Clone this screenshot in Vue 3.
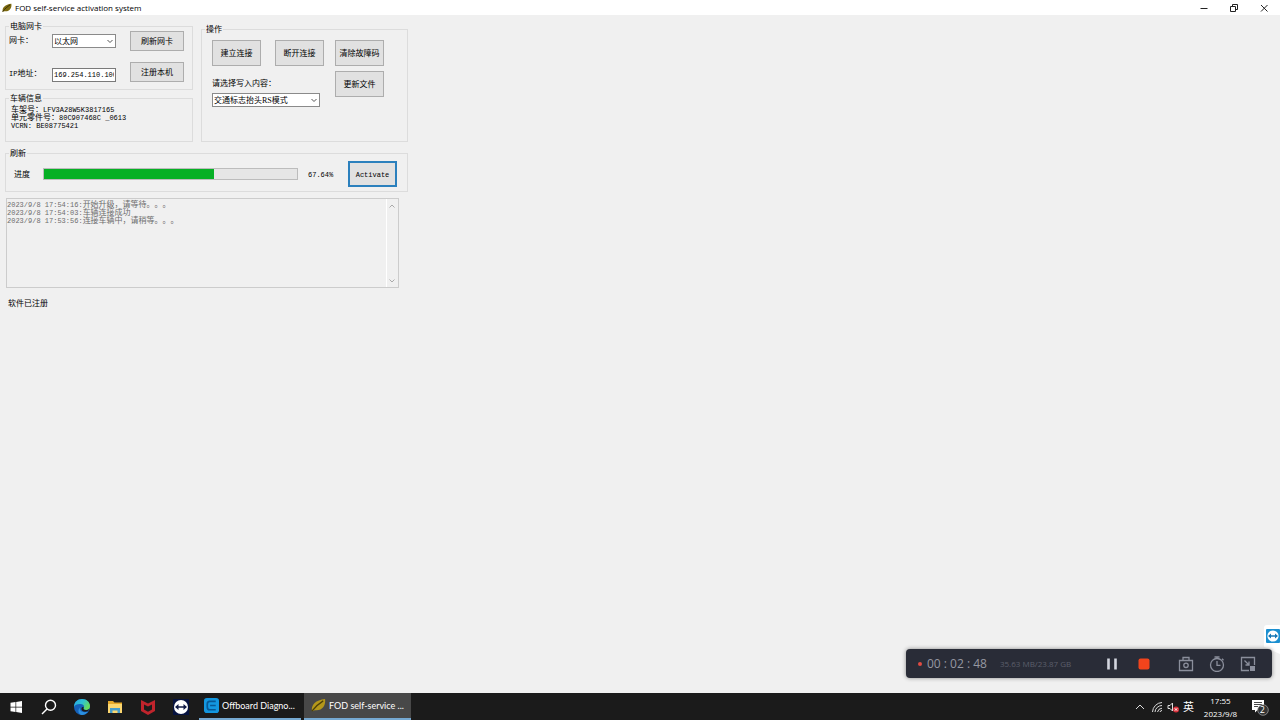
<script setup>
import { ref } from 'vue'

const adapter = ref('以太网')
const ip = ref('169.254.110.100')
const mode = ref('交通标志抬头RS模式')
const progress = ref(67)
const logs = [
  { time: '2023/9/8 17:54:16:', text: '开始升级，请等待。。。' },
  { time: '2023/9/8 17:54:03:', text: '车辆连接成功' },
  { time: '2023/9/8 17:53:56:', text: '连接车辆中，请稍等。。。' }
]
</script>

<template>
  <div class="desktop">
    <header class="titlebar">
      <svg class="leaf" viewBox="0 0 16 16" aria-hidden="true">
        <path d="M1 14C0 7 5 2 15 1c1 7-3 13-11 12z" fill="#7d6a10" />
        <path d="M1 14C5 9 8 6 13 3" stroke="#332c05" stroke-width="1.4" fill="none" />
      </svg>
      <h1>FOD self-service activation system</h1>
      <div class="window-buttons">
        <button aria-label="Minimize"><svg viewBox="0 0 10 10"><path d="M1.5 5.5h7" /></svg></button>
        <button aria-label="Restore"><svg viewBox="0 0 10 10"><path d="M1.500 3.500h5v5h-5zM3.500 3.500V1.500h5v5H6.500" /></svg></button>
        <button aria-label="Close"><svg viewBox="0 0 10 10"><path d="M2 2l6.500 6.500M8.500 2L2 8.500" /></svg></button>
      </div>
    </header>

    <main class="client">
      <div class="top">
        <div class="left">
          <fieldset class="network">
            <legend>电脑网卡</legend>
            <div class="net-row">
              <div class="net-labels">
                <label for="adapter">网卡：</label>
                <label for="ip"><span class="mono">IP</span>地址：</label>
              </div>
              <div class="net-fields">
                <div class="combo">
                  <select id="adapter" v-model="adapter"><option>以太网</option></select>
                  <svg viewBox="0 0 8 8"><path d="M1.500 3L4 5.500 6.500 3" /></svg>
                </div>
                <input id="ip" v-model="ip" class="mono" type="text" />
              </div>
              <div class="net-buttons">
                <button class="btn">刷新网卡</button>
                <button class="btn">注册本机</button>
              </div>
            </div>
          </fieldset>
          <fieldset class="vehicle">
            <legend>车辆信息</legend>
            <p>车架号：<span class="mono">LFV3A28W5K3817165</span></p>
            <p>单元零件号：<span class="mono">80C907468C _0613</span></p>
            <p><span class="mono">VCRN: BE08775421</span></p>
          </fieldset>
        </div>

        <fieldset class="operate">
          <legend>操作</legend>
          <div class="op-row">
            <div class="op-main">
              <div class="op-buttons">
                <button class="btn tall">建立连接</button>
                <button class="btn tall">断开连接</button>
              </div>
              <label for="mode">请选择写入内容：</label>
              <div class="combo">
                <select id="mode" v-model="mode"><option>交通标志抬头RS模式</option></select>
                <svg viewBox="0 0 8 8"><path d="M1.500 3L4 5.500 6.500 3" /></svg>
              </div>
            </div>
            <div class="op-side">
              <button class="btn tall">清除故障码</button>
              <button class="btn tall">更新文件</button>
            </div>
          </div>
        </fieldset>
      </div>

      <fieldset class="flash">
        <legend>刷新</legend>
        <div class="flash-row">
          <label for="bar">进度</label>
          <progress id="bar" :value="progress" max="100"></progress>
          <output class="mono">67.64%</output>
          <button class="btn tall primary mono">Activate</button>
        </div>
      </fieldset>

      <section class="log" role="log">
        <div class="log-lines">
          <p v-for="l in logs" :key="l.time"><span class="mono">{{ l.time }}</span>{{ l.text }}</p>
        </div>
        <div class="scroll">
          <svg viewBox="0 0 8 8"><path d="M1.500 5.500L4 3 6.500 5.500" /></svg>
          <svg viewBox="0 0 8 8"><path d="M1.500 2.500L4 5 6.500 2.500" /></svg>
        </div>
      </section>
      <p class="status">软件已注册</p>
    </main>

    <div class="viewer-tab">
      <svg viewBox="0 0 14 14"><rect width="14" height="14" rx="1" fill="#1b8fd0" /><circle cx="7" cy="7" r="5.600" fill="#fff" /><path d="M2 7l3-2.500v1.700h4V4.500L12 7 9 9.500V7.800H5v1.700z" fill="#1677b5" /></svg>
    </div>

    <div class="recorder">
      <span class="dot"></span>
      <span class="clock">00 : 02 : 48</span>
      <span class="size">35.63 MB/23.87 GB</span>
      <div class="rec-main">
        <button aria-label="Pause"><svg viewBox="0 0 16 16"><path d="M4.500 2.500v11M11.500 2.500v11" stroke="#d3d6df" stroke-width="2.600" /></svg></button>
        <button aria-label="Stop"><svg viewBox="0 0 16 16"><rect x="2.500" y="2.500" width="11" height="11" rx="2" fill="#f2441c" /></svg></button>
      </div>
      <div class="rec-tools">
        <button aria-label="Screenshot"><svg viewBox="0 0 16 16"><path d="M1.500 4.500h13v10h-13zM5 4.500v-3h6v3" /><circle cx="8" cy="9.300" r="2.200" /></svg></button>
        <button aria-label="Timer"><svg viewBox="0 0 16 16"><circle cx="8" cy="9" r="6.500" /><path d="M8 5v4.300h3.500M5.500 1h5M8 1v1.500M13 2.800l1.500 1.500" /></svg></button>
        <button aria-label="Mini view"><svg viewBox="0 0 16 16"><path d="M9 14.500H1.500v-13h13V9M4.500 4.500L9 9M9 5.500V9H5.500" /><rect x="10" y="10" width="5" height="5" fill="#8b8f9c" stroke="none" /></svg></button>
      </div>
    </div>

    <footer class="taskbar">
      <nav class="pins">
        <button aria-label="Start"><svg viewBox="0 0 16 16"><path d="M2.500 3.800l5-.7v4.600h-5zM8.200 3l5.800-.9v5.600H8.200zM2.500 8.400h5V13l-5-.7zM8.200 8.400H14V14l-5.800-.9z" fill="#fff" /></svg></button>
        <button aria-label="Search"><svg viewBox="0 0 16 16"><circle cx="9.500" cy="6.300" r="5" fill="none" stroke="#fff" stroke-width="1.400" /><path d="M6 10L1 15" stroke="#fff" stroke-width="1.500" /></svg></button>
        <button aria-label="Edge"><svg viewBox="0 0 16 16">
          <defs><linearGradient id="edge-g" x1="0" y1="0" x2="1" y2=".5"><stop offset="0" stop-color="#27a8e8" /><stop offset=".55" stop-color="#2fc2d0" /><stop offset="1" stop-color="#66dc5a" /></linearGradient></defs>
          <circle cx="8" cy="8" r="8" fill="#1560b8" />
          <path d="M0 8C0 3 3.500 0 8 0c5 0 8 3.500 8 7 0 3-2 4-4 4-2.500 0-3-1-2.200-2.200C11 6.500 8.500 5 6 5 3 5 .5 6 0 8z" fill="url(#edge-g)" />
          <path d="M6 8.500C5 12 9 14.500 14 12.500c-1 2-4 3.500-6.500 3.400C4 15 3.500 11 6 8.500z" fill="#2b8fe0" />
          <path d="M9.800 8.800C9 10 9.500 11 12 11c1.500 0 2.500-.4 3.300-1.200-.3 1-.8 1.800-1.300 2.400C10 13.500 6.800 12 7.500 9c.6-1.300 2.300-1.300 2.300-.2z" fill="#1b1b1b" />
        </svg></button>
        <button aria-label="File Explorer"><svg viewBox="0 0 16 16"><path d="M1 2h5l1.500 1.500H15V14H1z" fill="#e5a92c" /><path d="M1 5h14v9H1z" fill="#fbd66f" /><path d="M3 14V9h10v5h-2.500v-2.500h-5V14z" fill="#469dcc" /></svg></button>
        <button aria-label="McAfee"><svg viewBox="0 0 16 16"><path d="M1 1l7 3.500L15 1v11l-7 4-7-4z" fill="#c0242c" /><path d="M4 5.500l4 2 4-2v5L8 12.800l-4-2.300z" fill="#1b1b1b" /></svg></button>
        <button aria-label="TeamViewer"><svg viewBox="0 0 16 16"><rect width="16" height="16" fill="#06123f" /><circle cx="8" cy="8" r="7" fill="#fff" /><path d="M2 8l3.500-3v2.200h5V5L14 8l-3.500 3V8.800h-5V11z" fill="#101a45" /></svg></button>
      </nav>
      <button class="task">
        <svg viewBox="0 0 16 16"><rect width="16" height="16" rx="3" fill="#1397e0" /><path d="M12.500 3.500H6C4 3.500 3.500 5 3.500 6.500v3c0 2 1 3 2.500 3h6.500M6.500 8h6" fill="none" stroke="#075895" stroke-width="1.800" /></svg>
        <span>Offboard Diagno...</span>
      </button>
      <button class="task active">
        <svg viewBox="0 0 16 16"><path d="M1 14C0 7 5 2 15 1c1 7-3 13-11 12z" fill="#b5981a" /><path d="M1 14C5 9 8 6 13 3" stroke="#4d4008" stroke-width="1.400" fill="none" /></svg>
        <span>FOD self-service ...</span>
      </button>
      <div class="tray">
        <svg class="tray-up" viewBox="0 0 12 12"><path d="M2 8l4-4 4 4" /></svg>
        <svg class="tray-net" viewBox="0 0 12 12"><path d="M1.500 11A10 10 0 0 1 11 1.500M4 11a7 7 0 0 1 7-6.500M6.500 11A5 5 0 0 1 11 7.200M9 11a2 2 0 0 1 2-1.500" /></svg>
        <svg class="tray-sound" viewBox="0 0 12 12"><path d="M1 4.500h2L5.500 2v8L3 7.500H1z" /><circle cx="9" cy="8.500" r="3" fill="#d9313b" stroke="none" /><path d="M7.800 7.300l2.400 2.400M10.200 7.300L7.800 9.700" stroke="#fff" /></svg>
        <span class="ime">英</span>
        <time class="datetime"><span>17:55</span><span>2023/9/8</span></time>
        <button class="notice" aria-label="Notifications">
          <svg viewBox="0 0 18 18"><path d="M1 2h12v10H6.500L4 14.500V12H1z" fill="#fff" /><path d="M3 4.500h8M3 6.500h8M3 8.500h4" stroke="#1b1b1b" stroke-width=".8" /><circle cx="12" cy="12" r="5.300" fill="#333" stroke="#aaa" stroke-width=".7" /></svg>
          <span class="badge">2</span>
        </button>
      </div>
    </footer>
  </div>
</template>

<style>
body {
  margin: 0;
}
</style>

<style scoped>
* {
  box-sizing: border-box;
}
.desktop {
  position: relative;
  display: flex;
  flex-direction: column;
  min-height: 100vh;
  background: #f0f0f0;
  color: #000;
  font: 8px/10px "Liberation Sans", "Noto Sans CJK SC", sans-serif;
  text-spacing-trim: space-all;
}
button, input, select {
  margin: 0;
  padding: 0;
  border: 0;
  background: none;
  color: inherit;
  font: inherit;
}
p, h1 {
  margin: 0;
}
svg {
  display: block;
  flex: none;
}
.mono {
  font-family: "Liberation Mono", "Noto Sans CJK SC", monospace;
  font-size: 7px;
}
.titlebar {
  display: flex;
  align-items: center;
  height: 15px;
  padding: 0 1px 0 2px;
  background: #fff;
}
.leaf {
  width: 10px;
  height: 10px;
}
.titlebar h1 {
  margin-left: 3px;
  font: 400 8px/14px "Open Sans", sans-serif;
}
.window-buttons {
  display: flex;
  margin-left: auto;
}
.window-buttons button {
  display: grid;
  place-items: center;
  width: 30px;
  height: 14px;
}
.window-buttons svg {
  width: 10px;
  height: 10px;
  fill: none;
  stroke: #222;
  stroke-width: 1;
}
.client {
  flex: 1;
  padding: 6px 5px;
}
fieldset {
  min-width: 0;
  margin: 0;
  padding: 0;
  border: 1px solid #dcdcdc;
}
legend {
  height: 10px;
  margin-left: 3px;
  padding: 0 1px;
  line-height: 11px;
}
.top {
  display: flex;
  align-items: flex-end;
  gap: 8px;
}
.left {
  display: flex;
  flex-direction: column;
  gap: 3px;
  width: 188px;
}
.net-row {
  display: flex;
  padding: 0 8px 7px 3px;
}
.net-labels {
  display: flex;
  flex-direction: column;
  gap: 23px;
  width: 43px;
  padding-top: 5px;
}
.net-fields {
  display: flex;
  flex-direction: column;
  gap: 20px;
  width: 64px;
  padding-top: 3px;
}
.net-buttons {
  display: flex;
  flex-direction: column;
  gap: 11px;
  width: 54px;
  margin-left: auto;
}
.combo {
  position: relative;
}
.combo select {
  display: block;
  width: 100%;
  height: 14px;
  padding-left: 1px;
  border: 1px solid #8a8a8a;
  border-radius: 0;
  background: #fff;
  font-family: "Liberation Serif", "Noto Sans CJK SC", serif;
  line-height: 11px;
  appearance: none;
}
.combo svg {
  position: absolute;
  top: 3px;
  right: 2px;
  width: 8px;
  height: 8px;
  fill: none;
  stroke: #555;
  pointer-events: none;
}
input {
  display: block;
  width: 100%;
  height: 14px;
  padding: 0 1px;
  border: 1px solid #7a7a7a;
  background: #fff;
}
.btn {
  height: 20px;
  padding-top: 1px;
  border: 1px solid #adadad;
  background: #e1e1e1;
  line-height: 12px;
  white-space: nowrap;
}
.btn.tall {
  width: 49px;
  height: 26px;
}
.vehicle {
  height: 49px;
}
.vehicle p {
  padding-left: 5px;
  line-height: 8px;
}
.vehicle legend {
  margin-bottom: 3px;
}
.operate {
  width: 207px;
  height: 118px;
}
.op-row {
  display: flex;
  gap: 11px;
  padding: 6px 10px;
}
.op-main {
  width: 112px;
}
.op-buttons {
  display: flex;
  justify-content: space-between;
}
.op-main > label {
  display: block;
  margin: 13px 0 4px;
}
.op-main .combo {
  width: 108px;
}
.op-side {
  display: flex;
  flex-direction: column;
  gap: 5px;
}
.flash {
  width: 403px;
  height: 44px;
  margin-top: 6px;
}
.flash-row {
  display: flex;
  align-items: center;
  padding: 3px 10px 0 8px;
}
.flash-row label {
  width: 29px;
  padding-top: 1px;
  line-height: 12px;
}
progress {
  width: 255px;
  height: 12px;
  border: 1px solid #bcbcbc;
  background: #e6e6e6;
  appearance: none;
}
progress::-webkit-progress-bar {
  background: #e6e6e6;
}
progress::-webkit-progress-value {
  background: #06b025;
}
output {
  margin-left: 10px;
  padding-top: 1px;
  line-height: 12px;
}
.primary {
  margin-left: auto;
}
.btn.primary {
  border: 2px solid #2b80bd;
}
.log {
  display: flex;
  width: 393px;
  height: 90px;
  margin: 6px 0 0 1px;
  border: 1px solid #ccc;
  color: #6d6d6d;
}
.log-lines {
  flex: 1;
  padding: 2px 0;
  line-height: 8px;
}
.log-lines p,
.vehicle p {
  height: 8px;
  white-space: nowrap;
}
.scroll {
  display: flex;
  flex-direction: column;
  justify-content: space-between;
  width: 12px;
  padding: 3px 1px 2px;
  border-left: 1px solid #fff;
}
.scroll svg {
  width: 8px;
  height: 8px;
  fill: none;
  stroke: #aaa;
}
.status {
  margin: 11px 0 0 3px;
}
.viewer-tab {
  position: absolute;
  right: 0;
  bottom: 66px;
  height: 29px;
  padding: 4px 0 0 2px;
  border-radius: 3px 0 0 0;
  background: #fff;
  clip-path: polygon(0 0, 100% 0, 100% 100%, 0 75%);
}
.viewer-tab svg {
  width: 14px;
  height: 14px;
}
.recorder {
  position: absolute;
  right: 8px;
  bottom: 42px;
  display: flex;
  align-items: center;
  width: 366px;
  height: 29px;
  padding: 0 16px 0 12px;
  border-radius: 4px;
  background: #292c37;
  box-shadow: 0 0 4px #888;
}
.dot {
  width: 4px;
  height: 4px;
  border-radius: 50%;
  background: #e14b43;
}
.clock {
  margin-left: 5px;
  color: #9698a2;
  font: 12px/14px "Open Sans", sans-serif;
  white-space: nowrap;
}
.size {
  margin-left: 13px;
  color: #5c5f6b;
  font: 8px/14px "Open Sans", sans-serif;
  white-space: nowrap;
}
.rec-main,
.rec-tools {
  display: flex;
  gap: 16px;
}
.rec-main {
  margin-left: auto;
}
.rec-tools {
  gap: 15px;
  margin-left: 26px;
}
.recorder svg {
  width: 16px;
  height: 16px;
}
.rec-tools svg {
  fill: none;
  stroke: #8b8f9c;
  stroke-width: 1.3;
}
.taskbar {
  display: flex;
  height: 27px;
  background: #1b1b1b;
  color: #fff;
  font-family: "Open Sans", "Noto Sans CJK SC", sans-serif;
}
.pins {
  display: flex;
  width: 199px;
  padding-left: 8px;
  gap: 17px;
  align-items: center;
}
.pins svg {
  width: 16px;
  height: 16px;
}
.task {
  display: flex;
  align-items: center;
  gap: 3px;
  width: 102px;
  margin-right: 3px;
  padding-left: 5px;
  border-bottom: 2px solid #76a9d2;
  font-family: Lato, sans-serif;
  font-size: 9px;
  white-space: nowrap;
}
.task svg {
  width: 15px;
  height: 15px;
}
.task.active {
  width: 107px;
  padding-left: 7px;
  background: #484848;
}
.tray {
  display: flex;
  align-items: center;
  margin-left: auto;
  padding-right: 11px;
}
.tray > svg {
  width: 12px;
  height: 12px;
  margin-right: 4px;
  fill: none;
  stroke: #ddd;
}
.ime {
  font-size: 11px;
  line-height: 14px;
}
.datetime {
  display: flex;
  flex-direction: column;
  align-items: center;
  width: 53px;
  margin-right: 4px;
  font: 8px/13px "Open Sans", sans-serif;
}
.tray .tray-up {
  margin-right: 5px;
}
.notice {
  position: relative;
}
.notice svg {
  width: 18px;
  height: 18px;
}
.badge {
  position: absolute;
  right: 4px;
  bottom: 1px;
  font-size: 9px;
}
</style>
